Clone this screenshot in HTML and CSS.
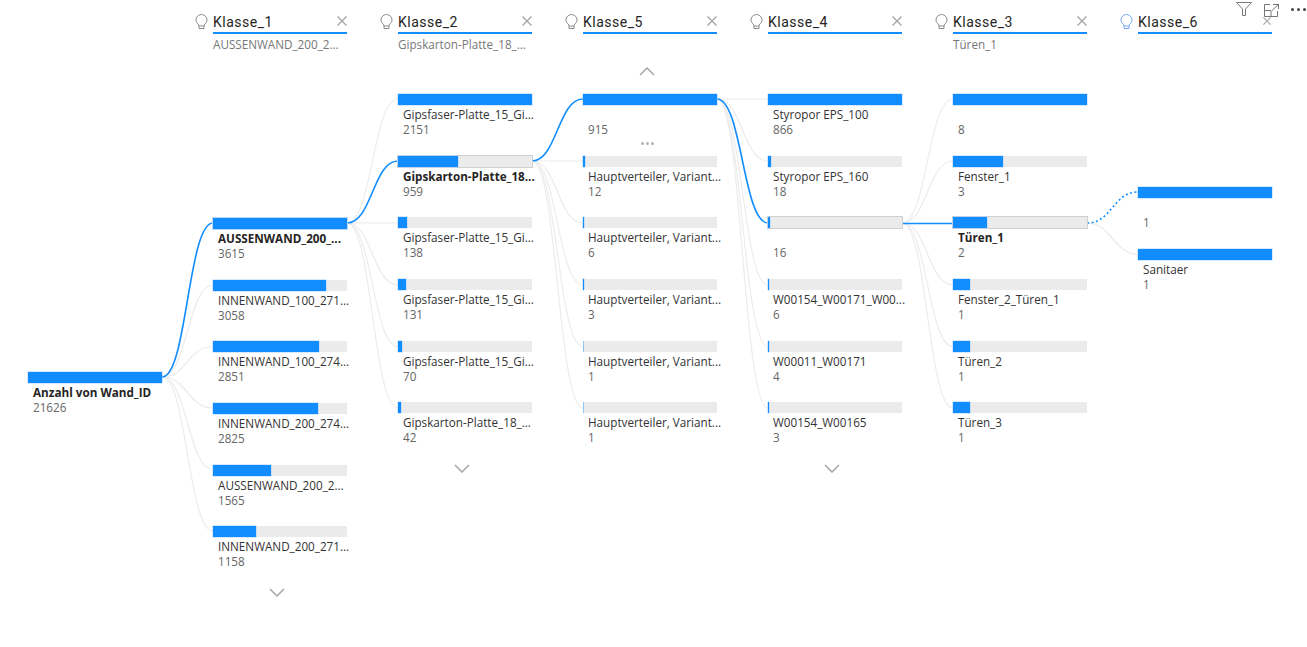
FILE: index.html
```html
<!DOCTYPE html>
<html lang="de">
<head>
<meta charset="UTF-8" />
<title>Decomposition tree</title>
<link rel="stylesheet" href="styles.css">
</head>
<body>

<div class="tree">

  <!-- connector lines, drawn under the columns -->
  <svg class="links" width="1307" height="647" viewBox="0 0 1307 647" fill="none">
    <g class="link">
      <path d="M162 377C187 377 188 285 213 285"/>
      <path d="M162 377C187 377 188 346.5 213 346.5"/>
      <path d="M162 377C187 377 188 408 213 408"/>
      <path d="M162 377C187 377 188 469.5 213 469.5"/>
      <path d="M162 377C187 377 188 531 213 531"/>
      <path d="M347 223C372 223 373 99 398 99"/>
      <path d="M347 223L398 223"/>
      <path d="M347 223C372 223 373 285 398 285"/>
      <path d="M347 223C372 223 373 346.5 398 346.5"/>
      <path d="M347 223C372 223 373 408 398 408"/>
      <path d="M532 161L583 161"/>
      <path d="M532 161C557 161 558 223 583 223"/>
      <path d="M532 161C557 161 558 285 583 285"/>
      <path d="M532 161C557 161 558 346.5 583 346.5"/>
      <path d="M532 161C557 161 558 408 583 408"/>
      <path d="M717 99L768 99"/>
      <path d="M717 99C742 99 743 161 768 161"/>
      <path d="M717 99C742 99 743 285 768 285"/>
      <path d="M717 99C742 99 743 346.5 768 346.5"/>
      <path d="M717 99C742 99 743 408 768 408"/>
      <path d="M902 223C927 223 928 99 953 99"/>
      <path d="M902 223C927 223 928 161 953 161"/>
      <path d="M902 223C927 223 928 285 953 285"/>
      <path d="M902 223C927 223 928 346.5 953 346.5"/>
      <path d="M902 223C927 223 928 408 953 408"/>
      <path d="M1087 223C1112 223 1113 254 1138 254"/>
    </g>
    <g class="link-on">
      <path d="M162 377C187 377 188 223 213 223"/>
      <path d="M347 223C372 223 373 161 398 161"/>
      <path d="M532 161C557 161 558 99 583 99"/>
      <path d="M717 99C742 99 743 223 768 223"/>
      <path d="M902 223.500L953 223.500"/>
    </g>
    <path class="link-next" d="M1087 223C1112 223 1113 192 1138 192"/>
  </svg>

  <div class="col col-root">
    <div class="node">
      <div class="bar"><div class="fill full"></div></div>
      <div class="label strong">Anzahl von Wand_ID</div>
      <div class="value">21626</div>
    </div>
  </div>

  <div class="col">
    <div class="head">
      <div class="title-row">
        <svg class="bulb" width="13" height="16" viewBox="0 0 13 16" fill="none"><path d="M4 11C2.500 9.500 1 8.200 1 6a5.500 5.500 0 0 1 11 0c0 2.200-1.500 3.500-3 5v3.500H4zM4 12h5"/></svg>
        <span class="title">Klasse_1</span>
        <svg class="close" width="10" height="10" viewBox="0 0 10 10"><path d="M.5.5l9 9M9.500.5l-9 9"/></svg>
      </div>
      <div class="picked">AUSSENWAND_200_2...</div>
    </div>
    <div class="nodes shift-2">
      <div class="node">
        <div class="bar on-blue"><div class="fill full"></div></div>
        <div class="label strong">AUSSENWAND_200_...</div>
        <div class="value">3615</div>
      </div>
      <div class="node">
        <div class="bar"><div class="fill" style="width:84.6%"></div></div>
        <div class="label">INNENWAND_100_271...</div>
        <div class="value">3058</div>
      </div>
      <div class="node">
        <div class="bar"><div class="fill" style="width:78.9%"></div></div>
        <div class="label">INNENWAND_100_274...</div>
        <div class="value">2851</div>
      </div>
      <div class="node">
        <div class="bar"><div class="fill" style="width:78.1%"></div></div>
        <div class="label">INNENWAND_200_274...</div>
        <div class="value">2825</div>
      </div>
      <div class="node">
        <div class="bar"><div class="fill" style="width:43.3%"></div></div>
        <div class="label">AUSSENWAND_200_2...</div>
        <div class="value">1565</div>
      </div>
      <div class="node">
        <div class="bar"><div class="fill" style="width:32%"></div></div>
        <div class="label">INNENWAND_200_271...</div>
        <div class="value">1158</div>
      </div>
      <div class="pager"><svg class="chev" width="16" height="9" viewBox="0 0 16 9"><path d="M1 1l7 7 7-7"/></svg></div>
    </div>
  </div>

  <div class="col">
    <div class="head">
      <div class="title-row">
        <svg class="bulb" width="13" height="16" viewBox="0 0 13 16" fill="none"><path d="M4 11C2.500 9.500 1 8.200 1 6a5.500 5.500 0 0 1 11 0c0 2.200-1.500 3.500-3 5v3.500H4zM4 12h5"/></svg>
        <span class="title">Klasse_2</span>
        <svg class="close" width="10" height="10" viewBox="0 0 10 10"><path d="M.5.5l9 9M9.500.5l-9 9"/></svg>
      </div>
      <div class="picked">Gipskarton-Platte_18_...</div>
    </div>
    <div class="nodes">
      <div class="node">
        <div class="bar"><div class="fill full"></div></div>
        <div class="label">Gipsfaser-Platte_15_Gi...</div>
        <div class="value">2151</div>
      </div>
      <div class="node">
        <div class="bar on"><div class="fill" style="width:44.6%"></div></div>
        <div class="label strong">Gipskarton-Platte_18...</div>
        <div class="value">959</div>
      </div>
      <div class="node">
        <div class="bar"><div class="fill" style="width:6.4%"></div></div>
        <div class="label">Gipsfaser-Platte_15_Gi...</div>
        <div class="value">138</div>
      </div>
      <div class="node">
        <div class="bar"><div class="fill" style="width:6.1%"></div></div>
        <div class="label">Gipsfaser-Platte_15_Gi...</div>
        <div class="value">131</div>
      </div>
      <div class="node">
        <div class="bar"><div class="fill" style="width:3.3%"></div></div>
        <div class="label">Gipsfaser-Platte_15_Gi...</div>
        <div class="value">70</div>
      </div>
      <div class="node">
        <div class="bar"><div class="fill" style="width:2%"></div></div>
        <div class="label">Gipskarton-Platte_18_...</div>
        <div class="value">42</div>
      </div>
      <div class="pager"><svg class="chev" width="16" height="9" viewBox="0 0 16 9"><path d="M1 1l7 7 7-7"/></svg></div>
    </div>
  </div>

  <div class="col">
    <div class="head">
      <div class="title-row">
        <svg class="bulb" width="13" height="16" viewBox="0 0 13 16" fill="none"><path d="M4 11C2.500 9.500 1 8.200 1 6a5.500 5.500 0 0 1 11 0c0 2.200-1.500 3.500-3 5v3.500H4zM4 12h5"/></svg>
        <span class="title">Klasse_5</span>
        <svg class="close" width="10" height="10" viewBox="0 0 10 10"><path d="M.5.5l9 9M9.500.5l-9 9"/></svg>
      </div>
      <div class="pager pager-up"><svg class="chev" width="16" height="9" viewBox="0 0 16 9"><path d="M1 8l7-7 7 7"/></svg></div>
    </div>
    <div class="nodes">
      <div class="node">
        <div class="bar"><div class="fill full"></div></div>
        <div class="label">&nbsp;</div>
        <div class="value">915</div>
        <div class="dots"><i></i><i></i><i></i></div>
      </div>
      <div class="node">
        <div class="bar"><div class="fill" style="width:1.500%"></div></div>
        <div class="label">Hauptverteiler, Variant...</div>
        <div class="value">12</div>
      </div>
      <div class="node">
        <div class="bar"><div class="fill" style="width:.8%"></div></div>
        <div class="label">Hauptverteiler, Variant...</div>
        <div class="value">6</div>
      </div>
      <div class="node">
        <div class="bar"><div class="fill" style="width:.4%"></div></div>
        <div class="label">Hauptverteiler, Variant...</div>
        <div class="value">3</div>
      </div>
      <div class="node">
        <div class="bar"><div class="fill thin"></div></div>
        <div class="label">Hauptverteiler, Variant...</div>
        <div class="value">1</div>
      </div>
      <div class="node">
        <div class="bar"><div class="fill thin"></div></div>
        <div class="label">Hauptverteiler, Variant...</div>
        <div class="value">1</div>
      </div>
    </div>
  </div>

  <div class="col">
    <div class="head">
      <div class="title-row">
        <svg class="bulb" width="13" height="16" viewBox="0 0 13 16" fill="none"><path d="M4 11C2.500 9.500 1 8.200 1 6a5.500 5.500 0 0 1 11 0c0 2.200-1.500 3.500-3 5v3.500H4zM4 12h5"/></svg>
        <span class="title">Klasse_4</span>
        <svg class="close" width="10" height="10" viewBox="0 0 10 10"><path d="M.5.5l9 9M9.500.5l-9 9"/></svg>
      </div>
    </div>
    <div class="nodes">
      <div class="node">
        <div class="bar"><div class="fill full"></div></div>
        <div class="label">Styropor EPS_100</div>
        <div class="value">866</div>
      </div>
      <div class="node">
        <div class="bar"><div class="fill" style="width:2.1%"></div></div>
        <div class="label">Styropor EPS_160</div>
        <div class="value">18</div>
      </div>
      <div class="node">
        <div class="bar on"><div class="fill" style="width:1.800%"></div></div>
        <div class="label">&nbsp;</div>
        <div class="value">16</div>
      </div>
      <div class="node">
        <div class="bar"><div class="fill" style="width:.7%"></div></div>
        <div class="label">W00154_W00171_W00...</div>
        <div class="value">6</div>
      </div>
      <div class="node">
        <div class="bar"><div class="fill" style="width:.5%"></div></div>
        <div class="label">W00011_W00171</div>
        <div class="value">4</div>
      </div>
      <div class="node">
        <div class="bar"><div class="fill" style="width:.4%"></div></div>
        <div class="label">W00154_W00165</div>
        <div class="value">3</div>
      </div>
      <div class="pager"><svg class="chev" width="16" height="9" viewBox="0 0 16 9"><path d="M1 1l7 7 7-7"/></svg></div>
    </div>
  </div>

  <div class="col">
    <div class="head">
      <div class="title-row">
        <svg class="bulb" width="13" height="16" viewBox="0 0 13 16" fill="none"><path d="M4 11C2.500 9.500 1 8.200 1 6a5.500 5.500 0 0 1 11 0c0 2.200-1.500 3.500-3 5v3.500H4zM4 12h5"/></svg>
        <span class="title">Klasse_3</span>
        <svg class="close" width="10" height="10" viewBox="0 0 10 10"><path d="M.5.5l9 9M9.500.5l-9 9"/></svg>
      </div>
      <div class="picked">Türen_1</div>
    </div>
    <div class="nodes">
      <div class="node">
        <div class="bar"><div class="fill full"></div></div>
        <div class="label">&nbsp;</div>
        <div class="value">8</div>
      </div>
      <div class="node">
        <div class="bar"><div class="fill" style="width:37.500%"></div></div>
        <div class="label">Fenster_1</div>
        <div class="value">3</div>
      </div>
      <div class="node">
        <div class="bar on"><div class="fill" style="width:25%"></div></div>
        <div class="label strong">Türen_1</div>
        <div class="value">2</div>
      </div>
      <div class="node">
        <div class="bar"><div class="fill" style="width:12.500%"></div></div>
        <div class="label">Fenster_2_Türen_1</div>
        <div class="value">1</div>
      </div>
      <div class="node">
        <div class="bar"><div class="fill" style="width:12.500%"></div></div>
        <div class="label">Türen_2</div>
        <div class="value">1</div>
      </div>
      <div class="node">
        <div class="bar"><div class="fill" style="width:12.500%"></div></div>
        <div class="label">Türen_3</div>
        <div class="value">1</div>
      </div>
    </div>
  </div>

  <div class="col">
    <div class="head">
      <div class="title-row">
        <svg class="bulb bulb-next" width="13" height="16" viewBox="0 0 13 16" fill="none"><path d="M4 11C2.500 9.500 1 8.200 1 6a5.500 5.500 0 0 1 11 0c0 2.200-1.500 3.500-3 5v3.500H4zM4 12h5"/></svg>
        <span class="title">Klasse_6</span>
        <svg class="close close-small" width="8" height="8" viewBox="0 0 10 10"><path d="M.5.5l9 9M9.500.5l-9 9"/></svg>
      </div>
    </div>
    <div class="nodes shift-1">
      <div class="node">
        <div class="bar"><div class="fill full"></div></div>
        <div class="label">&nbsp;</div>
        <div class="value">1</div>
      </div>
      <div class="node">
        <div class="bar"><div class="fill full"></div></div>
        <div class="label">Sanitaer</div>
        <div class="value">1</div>
      </div>
    </div>
  </div>
</div>

<!-- visual header icons -->
<div class="actions">
  <svg width="16" height="14" viewBox="0 0 16 14" fill="none"><path d="M.5.500h15L9.500 7v6.500h-3V7z"/></svg>
  <svg width="15" height="13" viewBox="0 0 15 13" fill="none"><path d="M6 .5H.5v12h13V7M9 .5h5.500V5M14.500.5L8 6.500M.5 6.500H7v6"/></svg>
  <div class="more"><i></i><i></i><i></i></div>
</div>

</body>
</html>
```

FILE: styles.css
```css
* {
  margin: 0; padding: 0; box-sizing: border-box;
}
html, body {
  height: 100%;
  background: #fff;
  overflow: hidden;
  font-family: 'Open Sans', 'Noto Sans', sans-serif;
}

.tree {
  position: relative;
  display: flex;
  gap: 51px;
  height: 647px;
  padding-left: 28px;
}

/* connectors */
.links {
  position: absolute;
  top: 0; left: 0;
}
.link path {
  stroke: #ececec;
  stroke-width: 1.2;
}
.link-on path {
  stroke: #118dff;
  stroke-width: 1.6;
}
.link-next {
  stroke: #118dff;
  stroke-width: 1.6;
  stroke-dasharray: 2 2.500;
}

/* columns */
.col {
  position: relative;
  width: 134px;
  flex-shrink: 0;
}
.col-root {
  padding-top: 372px;
}
.head {
  display: flex;
  flex-direction: column;
  height: 94px;
}
.title-row {
  display: flex;
  align-items: center;
  height: 34px;
  padding-top: 11px;
  border-bottom: 2px solid #118dff;
}
.title {
  flex: 1;
  font-family: 'Roboto', sans-serif;
  font-size: 14px;
  letter-spacing: .5px;
  color: #252423;
}
.bulb {
  margin-left: -18px;
  margin-right: 5px;
  stroke: #8c8a86;
}
.bulb-next {
  stroke: #7aa8f5;
}
.close {
  stroke: #a8a6a4;
  stroke-width: 1.4;
  margin-top: -1px;
}
.close-small {
  margin-top: -2px;
  margin-right: 1px;
}
.picked {
  margin-top: 3px;
  font-size: 11.7px;
  line-height: 15px;
  color: #777;
  white-space: nowrap;
}

/* nodes */
.shift-1 {
  margin-top: 93px;
}
.shift-2 {
  margin-top: 124px;
}
.node {
  height: 61.67px;
}
.bar {
  height: 11px;
  background: #ebebeb;
}
.bar.on {
  box-shadow: 0 0 0 1px #d0d0d0;
}
.bar.on-blue {
  box-shadow: 0 0 0 1px #c4dcf2;
}
.fill {
  height: 100%;
  min-width: 1px;
  background: #118dff;
  box-shadow: 0 0 0 .5px #a9d4fb;
}
.full {
  width: 100%;
}
.thin {
  width: 1px;
  background: #8cc6fb;
  box-shadow: none;
}
.label {
  margin-top: 2px;
  padding-left: 5px;
  font-size: 11.7px;
  line-height: 15px;
  color: #333;
  white-space: nowrap;
}
.strong {
  font-weight: 700;
  color: #252423;
}
.value {
  padding-left: 5px;
  font-size: 11.7px;
  line-height: 14px;
  color: #666;
}

/* paging */
.pager {
  display: flex;
  justify-content: center;
  padding-right: 6px;
}
.pager-up {
  margin-top: 33px;
}
.chev {
  fill: none;
  stroke: #a8a6a4;
  stroke-width: 1.5;
}
.dots {
  display: flex;
  justify-content: center;
  gap: 2px;
  margin-top: 6px;
  padding-right: 6px;
}
.dots i {
  width: 3px;
  height: 3px;
  border-radius: 50%;
  background: #b4b2b0;
}

/* visual header */
.actions {
  position: absolute;
  top: 2px; right: 0;
  display: flex;
  align-items: flex-start;
  gap: 12px;
}
.actions svg {
  stroke: #777;
}
.actions svg + svg {
  margin-top: 2px;
}
.more {
  display: flex;
  gap: 3px;
  margin-top: 6px;
  margin-right: 1px;
}
.more i {
  width: 3px;
  height: 3px;
  border-radius: 50%;
  background: #444;
}
```
